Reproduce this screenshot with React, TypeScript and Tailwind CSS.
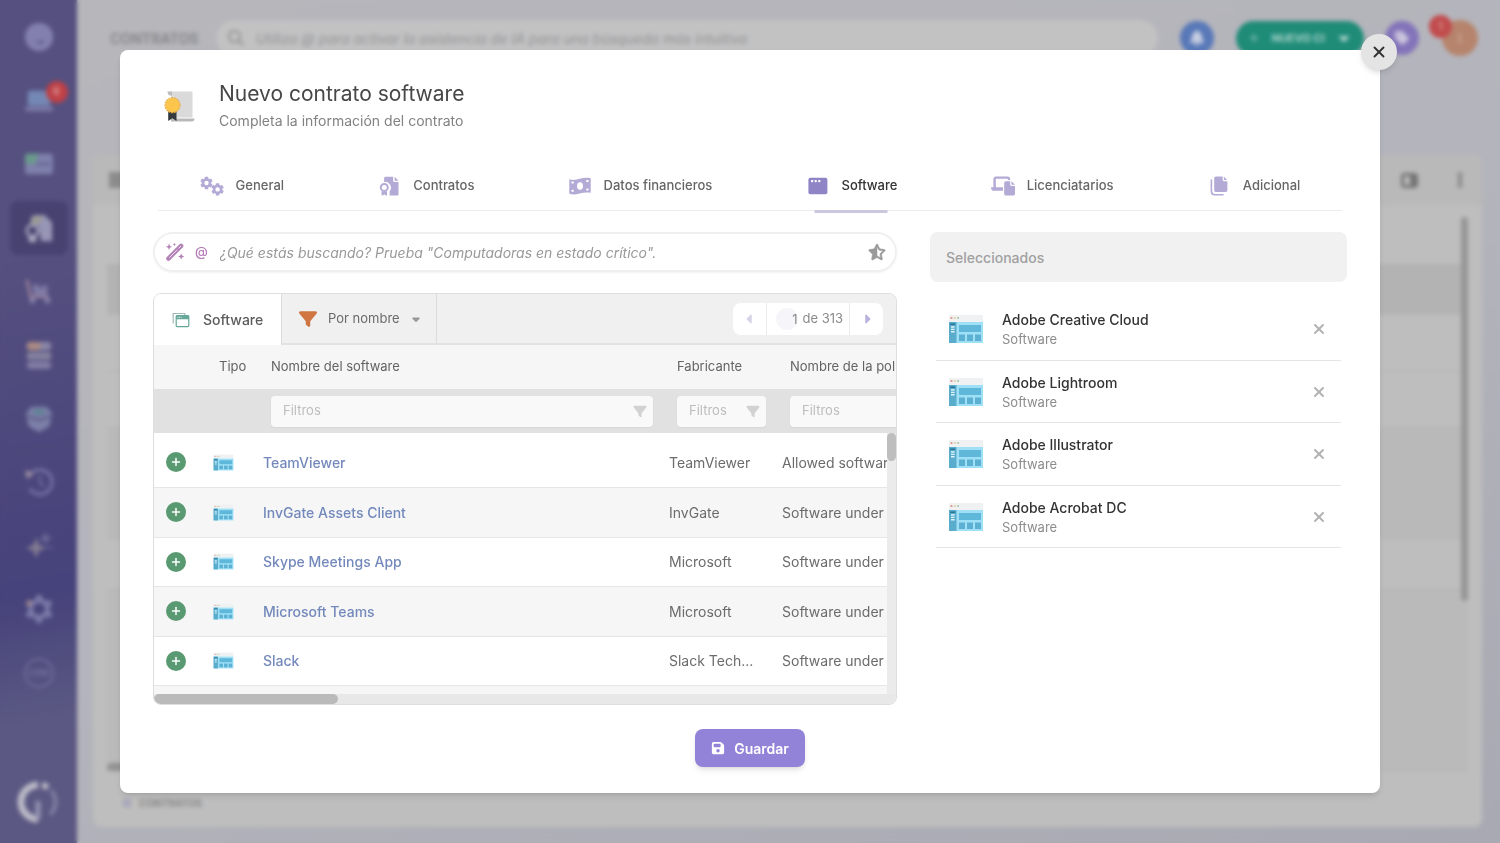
import { useState } from 'react'
import type { ReactNode } from 'react'
import {
  FaBell,
  FaCaretDown,
  FaCaretLeft,
  FaCaretRight,
  FaFilter,
  FaFloppyDisk,
  FaLaptopFile,
  FaMagnifyingGlass,
  FaRegStarHalfStroke,
  FaTag,
} from 'react-icons/fa6'
import { Plus, X } from 'lucide-react'

type Software = { name: string; vendor: string; policy: string }

const SOFTWARE: Software[] = [
  { name: 'TeamViewer', vendor: 'TeamViewer', policy: 'Allowed software' },
  { name: 'InvGate Assets Client', vendor: 'InvGate', policy: 'Software under' },
  { name: 'Skype Meetings App', vendor: 'Microsoft', policy: 'Software under' },
  { name: 'Microsoft Teams', vendor: 'Microsoft', policy: 'Software under' },
  { name: 'Slack', vendor: 'Slack Tech...', policy: 'Software under' },
]

const INITIAL_SELECTED = ['Adobe Creative Cloud', 'Adobe Lightroom', 'Adobe Illustrator', 'Adobe Acrobat DC']

function Gear({ cx, cy }: { cx: number; cy: number }) {
  return (
    <g transform={`translate(${cx} ${cy})`}>
      <circle r="3.5" fill="none" stroke="currentColor" strokeWidth="2.6" />
      {[0, 60, 120, 180, 240, 300].map((a) => (
        <rect key={a} x="-1.7" y="-6.2" width="3.4" height="2.6" rx="0.5" fill="currentColor" transform={`rotate(${a})`} />
      ))}
    </g>
  )
}

function GearsIcon() {
  return (
    <svg viewBox="0 0 24 24" className="h-6 w-6">
      <Gear cx={6.5} cy={9} />
      <Gear cx={17.6} cy={15.4} />
    </svg>
  )
}

function ContractIcon() {
  return (
    <svg viewBox="0 0 24 24" className="h-6 w-6" fill="currentColor">
      <path d="M8.5 2.8h7.7v3.9c0 .8.6 1.4 1.4 1.4h3.9v12.100c0 .8-.6 1.300-1.400 1.300h-7.500v-4.200a5.800 5.800 0 0 0-5.500-9.400V4.300c0-.9.600-1.500 1.400-1.500z" />
      <path d="M17.600 2.800l3.900 3.900h-3.900z" />
      <circle cx="7.300" cy="13.400" r="3.500" fill="none" stroke="currentColor" strokeWidth="2" />
      <path d="M4.600 17v4.800l2.700-1.300 2.700 1.300V17c-1.700.8-3.700.8-5.400 0z" />
    </svg>
  )
}

function MoneyIcon() {
  return (
    <svg viewBox="0 0 24 24" className="h-6 w-6">
      <path d="M1.300 5.200c7 2.800 12-2.800 21.400-1v14.600c-9.400-1.800-14.400 3.600-21.400 1z" fill="currentColor" />
      <ellipse cx="12" cy="12.100" rx="3" ry="3.800" fill="#fff" />
      <g fill="#fff">
        <rect x="3.400" y="7.600" width="2.400" height="2" rx=".6" />
        <rect x="3.400" y="15.800" width="2.400" height="2" rx=".6" />
        <rect x="18.200" y="6" width="2.400" height="2" rx=".6" />
        <rect x="18.200" y="14.400" width="2.400" height="2" rx=".6" />
      </g>
    </svg>
  )
}

function WindowIcon() {
  return (
    <svg viewBox="0 0 24 24" className="h-6 w-6">
      <rect x="2.400" y="3.800" width="19" height="16.400" rx="2" fill="currentColor" />
      <g fill="#fff">
        <rect x="5" y="6" width="2.200" height="2.200" rx=".6" />
        <rect x="8.600" y="6" width="2.200" height="2.200" rx=".6" />
        <rect x="12.200" y="6" width="2.200" height="2.200" rx=".6" />
      </g>
    </svg>
  )
}

function CopyIcon() {
  return (
    <svg viewBox="0 0 24 24" className="h-6 w-6">
      <path
        d="M9 2.400h6.600v3.400c0 .8.600 1.400 1.400 1.400h3.400v9c0 1-.8 1.800-1.800 1.800H9c-1 0-1.800-.8-1.800-1.800v-12c0-1 .8-1.800 1.800-1.800z"
        fill="currentColor"
      />
      <path d="M16.800 2.600l3.400 3.400h-3.400z" fill="currentColor" />
      <path d="M4.400 6v11.600c0 2 1.200 3.200 3.200 3.200h8.400" fill="none" stroke="currentColor" strokeWidth="1.600" strokeLinecap="round" />
    </svg>
  )
}

function WandIcon() {
  return (
    <svg viewBox="0 0 20 20" className="h-5 w-5 shrink-0 text-[#b383b8]" fill="currentColor">
      <path d="M3.400 16.600L16.100 3.900" stroke="currentColor" strokeWidth="4.400" strokeLinecap="round" />
      <path d="M4.600 15.400L12 8M13.900 6.100l1.800-1.800" stroke="#ecdfee" strokeWidth="1" strokeLinecap="round" />
      <path d="M4 1.600l.9 2.300 2.300.9-2.300.9L4 8l-.9-2.300L.8 4.800l2.300-.9z" />
      <path d="M9.400.8l.5 1.200 1.200.5-1.200.5-.5 1.200-.5-1.200-1.200-.5 1.200-.5z" />
      <path d="M16.200 11.400l.9 2.200 2.200.9-2.200.9-.9 2.200-.9-2.200-2.200-.9 2.200-.9z" />
    </svg>
  )
}

function StackedWindowsIcon() {
  return (
    <svg viewBox="0 0 18 18" className="h-[18px] w-[18px]" fill="none">
      <path d="M1.200 12.500v-10h11.600v1.600" stroke="#a3b9b5" strokeWidth="1.200" />
      <rect x="4.200" y="4.600" width="12.600" height="11" rx="1" stroke="#65a899" strokeWidth="1.200" />
      <path d="M4.200 4.600h12.600v3.600H4.200z" fill="#65a899" />
      <path d="M5.600 6.300h4" stroke="#fff" strokeWidth=".9" strokeDasharray="1 .6" />
    </svg>
  )
}

function SoftwareIcon({ className }: { className: string }) {
  return (
    <svg viewBox="0 0 36 30" className={className} preserveAspectRatio="none">
      <rect x="1" y="1" width="34" height="7" fill="#eff1f2" />
      <circle cx="3.500" cy="4" r="1.100" fill="#d98f8a" />
      <circle cx="6.800" cy="4" r="1.100" fill="#e3cfa0" />
      <circle cx="10.100" cy="4" r="1.100" fill="#a9c9b2" />
      <rect x="1" y="8" width="34" height="21" fill="#9fe0f7" />
      <rect x="1" y="8" width="7.500" height="21" fill="#5aaccd" />
      <path d="M2.200 10.200h5" stroke="#2a7795" strokeWidth="1.600" />
      <path d="M3 13h3.600M3 15.400h3.600M3 17.800h3.600" stroke="#dff4fb" strokeWidth="1.400" />
      <rect x="11" y="11" width="22" height="7" fill="#5fb8da" />
      <rect x="11" y="20.500" width="6" height="6.500" fill="#5cb0d2" />
      <rect x="19" y="20.500" width="6" height="6.500" fill="#5cb0d2" />
      <rect x="27" y="20.500" width="6" height="6.500" fill="#5cb0d2" />
    </svg>
  )
}

function CertificateIcon() {
  return (
    <svg viewBox="0 0 34 34" className="h-[34px] w-[34px]">
      <path d="M7 2.500h22.500v26H8V6z" fill="#dadada" />
      <path d="M4.500 2.500H9v4H7C5.500 6.500 4.500 4.500 4.500 2.500z" fill="#bdbdbd" />
      <path d="M8 29.500h23.500c0 2-1 3-3 3H8z" fill="#b9b9b9" />
      <path d="M5.200 22.500h8.300v9.500l-4.100-2.800L5.200 32z" fill="#33393d" />
      <circle cx="9.500" cy="16.200" r="7.200" fill="#fbc64b" />
      <circle cx="9.500" cy="16.200" r="7.500" fill="none" stroke="#e8ac45" strokeWidth="1.200" strokeDasharray="2 .8" />
    </svg>
  )
}

function LogoIcon() {
  return (
    <svg viewBox="0 0 44 44" className="h-11 w-11" fill="none">
      <path d="M21 5a17 17 0 1 0 0 34" stroke="#b9b9c6" strokeWidth="7" />
      <path d="M25 5a17 17 0 0 1 6 2.500" stroke="#b9b9c6" strokeWidth="6" />
      <path d="M34 10.500a17 17 0 0 1-1 24" stroke="#8280a4" strokeWidth="4" />
      <path d="M21 21v18" stroke="#9593b0" strokeWidth="5" />
    </svg>
  )
}

// Two-tone glyphs of the side menu, all on a 32px grid
const SIDEBAR: { label: string; icon: ReactNode }[] = [
  {
    label: 'Inicio',
    icon: (
      <>
        <circle cx="16" cy="16" r="15" fill="#8380b0" />
        <path d="M11 19c3 3 7 3 10-1l-1 4c-3 2-6 1-9-3z" fill="#4f4b7f" />
      </>
    ),
  },
  {
    label: 'Dispositivos',
    icon: (
      <>
        <rect x="4" y="5" width="24" height="16" rx="2" fill="#7488b5" />
        <path d="M1 22h30v2c0 2-1 3-3 3H4c-2 0-3-1-3-3z" fill="#7d7aa8" />
      </>
    ),
  },
  {
    label: 'Servidores',
    icon: (
      <>
        <rect x="1" y="5" width="30" height="22" rx="3" fill="#7f80ab" />
        <path d="M4 5h12l-4 11H1V8c0-2 1-3 3-3z" fill="#6a9a8c" />
        <path d="M13 16h15" stroke="#5d5a89" strokeWidth="2" />
      </>
    ),
  },
  {
    label: 'Contratos',
    icon: (
      <>
        <path d="M13 2h9l8 8v20H18l-2-17H7V7c0-3 3-5 6-5z" fill="#9896b6" />
        <path d="M8 4h12l-4 8H8z" fill="#9b9a93" />
        <circle cx="9" cy="19" r="6" fill="none" stroke="#a3a3bc" strokeWidth="3" />
        <path d="M5 24h8v7H5z" fill="#a8a8bd" />
      </>
    ),
  },
  {
    label: 'Compras',
    icon: (
      <>
        <path d="M3 4l4 18h19" fill="none" stroke="#9a7f99" strokeWidth="3" />
        <path d="M9 9h7v4h3v-3h6v11H11z" fill="#7f7ba6" />
        <circle cx="9" cy="26" r="3" fill="#8784ae" />
        <circle cx="25" cy="26" r="3" fill="#8784ae" />
      </>
    ),
  },
  {
    label: 'Datos',
    icon: (
      <>
        <rect x="3" y="2" width="26" height="9" rx="4" fill="#8b87a8" />
        <rect x="3" y="2" width="15" height="9" rx="4" fill="#ab8a83" />
        <rect x="3" y="13" width="26" height="8" rx="3" fill="#85829f" />
        <rect x="3" y="23" width="26" height="8" rx="4" fill="#807da5" />
      </>
    ),
  },
  {
    label: 'Paquetes',
    icon: (
      <>
        <path d="M2 10l6-7h16l6 7-3 14-11 6-11-6z" fill="#7c7fa8" />
        <path d="M9 9l7 3 7-3-3-3h-8z" fill="#598490" />
        <path d="M3 13l13 4 13-4" fill="none" stroke="#57547f" strokeWidth="2" />
      </>
    ),
  },
  {
    label: 'Historial',
    icon: (
      <>
        <path d="M6 9a13 13 0 1 1 0 14" fill="none" stroke="#6e6b9c" strokeWidth="4" />
        <path d="M1 3l10 4-8 6z" fill="#99899f" />
        <path d="M17 9v7l4 5" fill="none" stroke="#6e6b9c" strokeWidth="2.500" />
      </>
    ),
  },
  {
    label: 'Asistente',
    icon: (
      <>
        <path d="M13 7l3 8 8 3-8 3-3 8-3-8-8-3 8-3z" fill="#827b91" />
        <path d="M23 3l1.500 3.500L28 8l-3.500 1.500L23 13l-1.500-3.500L18 8l3.500-1.500zM24 18h7" fill="#6a6696" stroke="#6a6696" strokeWidth="2" />
      </>
    ),
  },
  {
    label: 'Ajustes',
    icon: (
      <>
        <circle cx="16" cy="16" r="9" fill="none" stroke="#7b7aa8" strokeWidth="5" />
        {[0, 60, 120, 180, 240, 300].map((a) => (
          <rect key={a} x="13" y="1" width="6" height="5" fill={a === 300 ? '#a0868f' : '#7b7aa8'} transform={`rotate(${a} 16 16)`} />
        ))}
      </>
    ),
  },
]

function Backdrop() {
  return (
    <div className="fixed inset-0 flex bg-[#b3b3bb]" inert>
      <aside className="flex w-[77px] shrink-0 flex-col items-center justify-between bg-linear-[170deg] from-[#55507f] from-30% via-[#46427b] via-70% to-[#5b5983] to-85% pt-[10px] pb-[19px]">
        <nav className="flex h-[690px] flex-col items-center justify-between">
          {SIDEBAR.map((item, i) => (
            <a
              key={item.label}
              href="#"
              aria-label={item.label}
              className={
                i === 3
                  ? 'relative flex h-[54px] w-[58px] items-center justify-center rounded-lg bg-[#474270]'
                  : 'relative flex h-[54px] w-[58px] items-center justify-center'
              }
            >
              <svg viewBox="0 0 32 32" className="h-[30px] w-[30px]">{item.icon}</svg>
              {i === 1 && (
                <span className="absolute top-[7px] right-0 flex h-[22px] w-[22px] items-center justify-center rounded-full bg-[#bf4046] text-[11px] text-[#e0b0b0]">
                  6
                </span>
              )}
            </a>
          ))}
          <a href="#" aria-label="Más" className="flex h-[54px] w-[58px] items-center justify-center">
            <span className="flex h-[30px] w-[30px] items-center justify-center rounded-full border-2 border-[#6f6c9b] text-[9px] font-bold text-[#6f6c9b]">
              CRM
            </span>
          </a>
        </nav>
        <LogoIcon />
      </aside>

      <div className="flex min-w-0 flex-1 flex-col bg-linear-160 from-[#b6b6bb] via-[#b4b4bc] to-[#a9a9b3] pr-[18px] pb-4 pl-4">
        <header className="flex h-[76px] shrink-0 items-center pr-1 pl-[17px]">
          <h2 className="w-[106px] text-[14px] font-bold text-[#8a8a8d]">CONTRATOS</h2>
          <div className="flex h-9 flex-1 items-center gap-3 rounded-full bg-[#c2c2c3] px-3 text-[14px] text-[#949496] italic">
            <FaMagnifyingGlass className="h-4 w-4" />
            Utiliza @ para activar la asistencia de IA para una búsqueda más intuitiva
          </div>
          <div className="ml-[22px] flex h-[34px] w-[34px] items-center justify-center rounded-full bg-[#5878b8]">
            <FaBell className="h-4 w-4 text-[#c5cde0]" />
          </div>
          <div className="ml-[22px] flex h-[35px] w-[128px] items-center justify-between rounded-full bg-[#1f8c78] px-3 text-[11px] font-bold text-[#a7d0c8]">
            <Plus className="h-3 w-3" />
            NUEVO CI
            <FaCaretDown className="h-4 w-4" />
          </div>
          <div className="ml-[21px] flex h-[34px] w-[34px] items-center justify-center rounded-full bg-[#8374ba]">
            <FaTag className="h-4 w-4 text-[#cbc6dd]" />
          </div>
          <div className="relative ml-[23px] flex h-9 w-9 items-center justify-center rounded-full bg-[#b6846c] text-[14px] text-[#d2b2a2]">
            I
            <span className="absolute -top-[5px] -left-[13px] flex h-[23px] w-[23px] items-center justify-center rounded-full bg-[#c24b4d] text-[11px]">
              1
            </span>
          </div>
        </header>

        <div className="mt-[79px] flex flex-1 flex-col rounded-lg bg-[#bebebe]">
          <div className="flex h-[50px] items-center justify-between rounded-t-lg bg-[#b9b9b9] px-4">
            <span className="h-4 w-8 bg-[#8c8c8c]" />
            <div className="flex items-center gap-10 pr-1">
              <span className="h-[15px] w-[17px] rounded-sm border-[3px] border-r-8 border-[#757575]" />
              <span className="h-4 w-1 bg-[#8a8a8a]" />
            </div>
          </div>
          <div className="relative mx-[14px] flex flex-1 flex-col pb-14">
            <div className="h-[60px] border-b border-[#b2b2b2]" />
            <div className="h-[50px] bg-[#b3b3b3]" />
            <div className="h-[57px] border-b border-[#b2b2b2]" />
            <div className="h-[56px] border-b border-[#b2b2b2]" />
            <div className="h-[112px] bg-[#b9b9b9]" />
            <div className="h-[50px] border-b border-[#b2b2b2]" />
            <div className="flex-1 border-b border-[#b2b2b2] bg-[#bababa]" />
            <div className="absolute top-3 right-0 h-[384px] w-[7px] rounded-full bg-[#969696]" />
            <div className="-mt-2 h-2 w-1/2 rounded-full bg-[#929292]" />
          </div>
          <div className="-mt-12 flex h-12 items-center gap-2 px-[30px] text-[10px] font-bold text-[#8a8a8a]">
            <span className="h-2 w-2 rounded-full border-2 border-[#9a98b8]" />
            CONTRATOS
          </div>
        </div>
      </div>
    </div>
  )
}

const TABS: { label: string; icon: ReactNode }[] = [
  { label: 'General', icon: <GearsIcon /> },
  { label: 'Contratos', icon: <ContractIcon /> },
  { label: 'Datos financieros', icon: <MoneyIcon /> },
  { label: 'Software', icon: <WindowIcon /> },
  { label: 'Licenciatarios', icon: <FaLaptopFile className="h-6 w-6" /> },
  { label: 'Adicional', icon: <CopyIcon /> },
]

function Tabs() {
  const [active, setActive] = useState('Software')

  return (
    <div role="tablist" className="flex h-12 justify-around">
      {TABS.map((tab) => (
        <button
          key={tab.label}
          role="tab"
          aria-selected={tab.label === active}
          onClick={() => setActive(tab.label)}
          className="group relative flex h-12 items-center gap-3 text-[13px] font-medium text-[#666] aria-selected:text-[#333]"
        >
          <span className="text-[#b3aad6] group-aria-selected:text-[#8f84c6]">{tab.icon}</span>
          {tab.label}
          {tab.label === active && (
            <span className="absolute -bottom-[3px] left-1/2 h-[3px] w-[73px] -translate-x-1/2 bg-[#cbc7dd]" />
          )}
        </button>
      ))}
    </div>
  )
}

function FilterField({ label }: { label: string }) {
  return (
    <label className="flex h-[31px] items-center rounded-sm bg-[#f9f9f9] pr-1.5 pl-3 shadow-xs">
      <input
        type="text"
        aria-label={`Filtrar ${label}`}
        placeholder="Filtros"
        className="w-full min-w-0 bg-transparent text-[13px] font-normal outline-none placeholder:text-[#bdbdbd]"
      />
      <FaFilter className="h-[13px] w-[14px] shrink-0 text-[#d2d2d2]" />
    </label>
  )
}

function SoftwareTable({ onAdd }: { onAdd: (name: string) => void }) {
  return (
    <div className="mt-[21px] overflow-hidden rounded-lg border border-[#dedede] bg-white">
      {/* Toolbar */}
      <div className="flex h-[51px] bg-[#f0f0f0]">
        <div className="flex w-[128px] items-center gap-[13px] border-r border-[#dcdcdc] bg-white pl-[18px] text-[14px] font-medium text-[#5c5c5c]">
          <StackedWindowsIcon />
          Software
        </div>
        <div className="flex flex-1 items-center justify-between border-b-2 border-[#e2e2e2] pr-[13px]">
          <button className="flex h-full w-[155px] items-center border-r border-[#dcdcdc] pl-[17px] text-[13px] text-[#6a6a6a]">
            <FaFilter className="mr-[11px] h-[18px] w-[18px] text-[#cf7642]" />
            Por nombre
            <FaCaretDown className="ml-[10px] h-3 w-3 text-[#999]" />
          </button>
          <div className="flex h-8 overflow-hidden rounded-lg bg-white text-[13px] text-[#8a8a8a]">
            <button aria-label="Página anterior" className="flex w-[33px] items-center justify-center">
              <FaCaretLeft className="h-[14px] w-[14px] text-[#d8d4e8]" />
            </button>
            <label className="flex w-[84px] items-center justify-end gap-1 border-x border-[#ececec] pr-1.5">
              <input
                aria-label="Página"
                defaultValue="1"
                className="h-[22px] w-[22px] rounded-full bg-[#f6f6fa] pr-px text-right outline-none"
              />
              de 313
            </label>
            <button aria-label="Página siguiente" className="flex w-[33px] items-center justify-center">
              <FaCaretRight className="h-[14px] w-[14px] text-[#b8b2dc]" />
            </button>
          </div>
        </div>
      </div>

      <div className="relative overflow-hidden">
        <table className="w-[860px] min-w-full table-fixed border-collapse text-left text-[14px] text-[#6b6b6b]">
          <colgroup>
            <col className="w-[45px]" />
            <col className="w-[56px]" />
            <col className="w-[406px]" />
            <col className="w-[113px]" />
            <col />
          </colgroup>
          <thead>
            <tr className="h-11 bg-[#f6f6f6] text-[13px] text-[#636363] [&>th]:font-normal">
              <th aria-label="Agregar" />
              <th className="pl-5">Tipo</th>
              <th className="pl-4">Nombre del software</th>
              <th className="pl-4">Fabricante</th>
              <th className="pl-4">Nombre de la política</th>
            </tr>
            <tr className="h-11 bg-[#e1e1e1]">
              <th colSpan={2} />
              <th className="pr-2 pl-4"><FilterField label="Nombre del software" /></th>
              <th className="pr-2 pl-4"><FilterField label="Fabricante" /></th>
              <th className="pr-2 pl-4"><FilterField label="Nombre de la política" /></th>
            </tr>
          </thead>
          <tbody>
            <tr>
              <td colSpan={5} className="h-[5px]" />
            </tr>
            {SOFTWARE.map((s) => (
              <tr key={s.name} className="border-b border-[#e6e6e6] odd:h-[50px] odd:bg-[#f6f6f6] even:h-[49px]">
                <td className="pl-3">
                  <button
                    aria-label={`Agregar ${s.name}`}
                    onClick={() => onAdd(s.name)}
                    className="flex h-5 w-5 items-center justify-center rounded-full bg-[#5a9a72] text-white"
                  >
                    <Plus className="h-3 w-3" strokeWidth={3} />
                  </button>
                </td>
                <td className="pl-[14px]">
                  <SoftwareIcon className="h-[17px] w-[21px]" />
                </td>
                <td className="px-2 font-medium">
                  <a href="#" className="text-[#7389bb]">{s.name}</a>
                </td>
                <td className="px-2">{s.vendor}</td>
                <td className="px-2 whitespace-nowrap">{s.policy}</td>
              </tr>
            ))}
            <tr className="bg-[#f6f6f6]">
              <td colSpan={5} className="h-[9px]" />
            </tr>
          </tbody>
        </table>
        <div className="absolute top-[88px] right-0 bottom-0 w-[9px] bg-[#ebebeb]">
          <div className="h-7 rounded-full bg-[#bebebe]" />
        </div>
      </div>
      <div className="h-[10px] bg-[#e8e8e8]">
        <div className="h-[10px] w-[184px] rounded-full bg-[#bababa]" />
      </div>
    </div>
  )
}

export default function App() {
  const [selected, setSelected] = useState(INITIAL_SELECTED)

  function add(name: string) {
    setSelected((prev) => (prev.includes(name) ? prev : [...prev, name]))
  }

  function remove(name: string) {
    setSelected((prev) => prev.filter((n) => n !== name))
  }

  return (
    <div className="font-['Inter',sans-serif]">
      <Backdrop />
      <div className="relative min-h-screen px-[8%] py-[50px] backdrop-blur-[2px]">
        <div role="dialog" aria-labelledby="title" className="relative rounded-lg bg-white px-[33px] pb-[26px] shadow-md">
          <button
            aria-label="Cerrar"
            className="absolute -top-4 -right-[17px] flex h-9 w-9 items-center justify-center rounded-full bg-[#e4e4e4] text-[#333] shadow-md"
          >
            <X className="h-[18px] w-[18px]" strokeWidth={2.5} />
          </button>

          {/* Header */}
          <div className="flex h-28 items-center gap-[22px] pl-[10px]">
            <CertificateIcon />
            <div>
              <h1 id="title" className="text-[21px] leading-[30px] text-[#474747]">Nuevo contrato software</h1>
              <p className="text-[14px] leading-6 text-[#828282]">Completa la información del contrato</p>
            </div>
          </div>

          <Tabs />
          <div className="mx-[5px] h-px bg-[#ececec]" />

          <div className="mt-[21px] grid grid-cols-[744fr_417fr] gap-[33px]">
            <div className="min-w-0">
              <label className="flex h-10 items-center rounded-full border-2 border-[#f0f0f0] pr-[9px] pl-[10px] shadow-xs">
                <WandIcon />
                <span className="ml-2.5 text-[13px] font-medium text-[#b57ab8]">@</span>
                <input
                  type="text"
                  aria-label="Buscar software"
                  placeholder='¿Qué estás buscando? Prueba "Computadoras en estado crítico".'
                  className="ml-3 min-w-0 flex-1 bg-transparent text-[14px] italic outline-none placeholder:text-[#999]"
                />
                <FaRegStarHalfStroke className="h-[18px] w-[18px] stroke-[#999] stroke-[16px] text-[#999]" />
              </label>
              <SoftwareTable onAdd={add} />
            </div>

            <section>
              <h2 className="flex h-[50px] items-center rounded-lg bg-[#f1f1f1] px-4 text-[14px] font-medium text-[#a0a0a0]">
                Seleccionados
              </h2>
              <ul className="mx-1.5 mt-4">
                {selected.map((name) => (
                  <li key={name} className="flex items-center border-b border-[#e4e4e4] pr-3.5 pl-3 odd:h-[63px] even:h-[62px]">
                    <SoftwareIcon className="h-[30px] w-9 shrink-0" />
                    <div className="ml-[18px] flex-1">
                      <p className="text-[14px] leading-5 font-medium text-[#333]">{name}</p>
                      <p className="text-[13px] leading-[18px] text-[#8c8c8c]">Software</p>
                    </div>
                    <button aria-label={`Quitar ${name}`} onClick={() => remove(name)} className="text-[#b3b3b3]">
                      <X className="h-4 w-4" strokeWidth={3} />
                    </button>
                  </li>
                ))}
              </ul>
            </section>
          </div>

          <button className="mx-auto mt-6 flex h-[38px] w-[110px] items-center justify-center gap-[9px] rounded-lg bg-[#9283d8] text-[14px] font-semibold text-white shadow-md">
            <FaFloppyDisk className="h-[14px] w-[14px]" />
            Guardar
          </button>
        </div>
      </div>
    </div>
  )
}
